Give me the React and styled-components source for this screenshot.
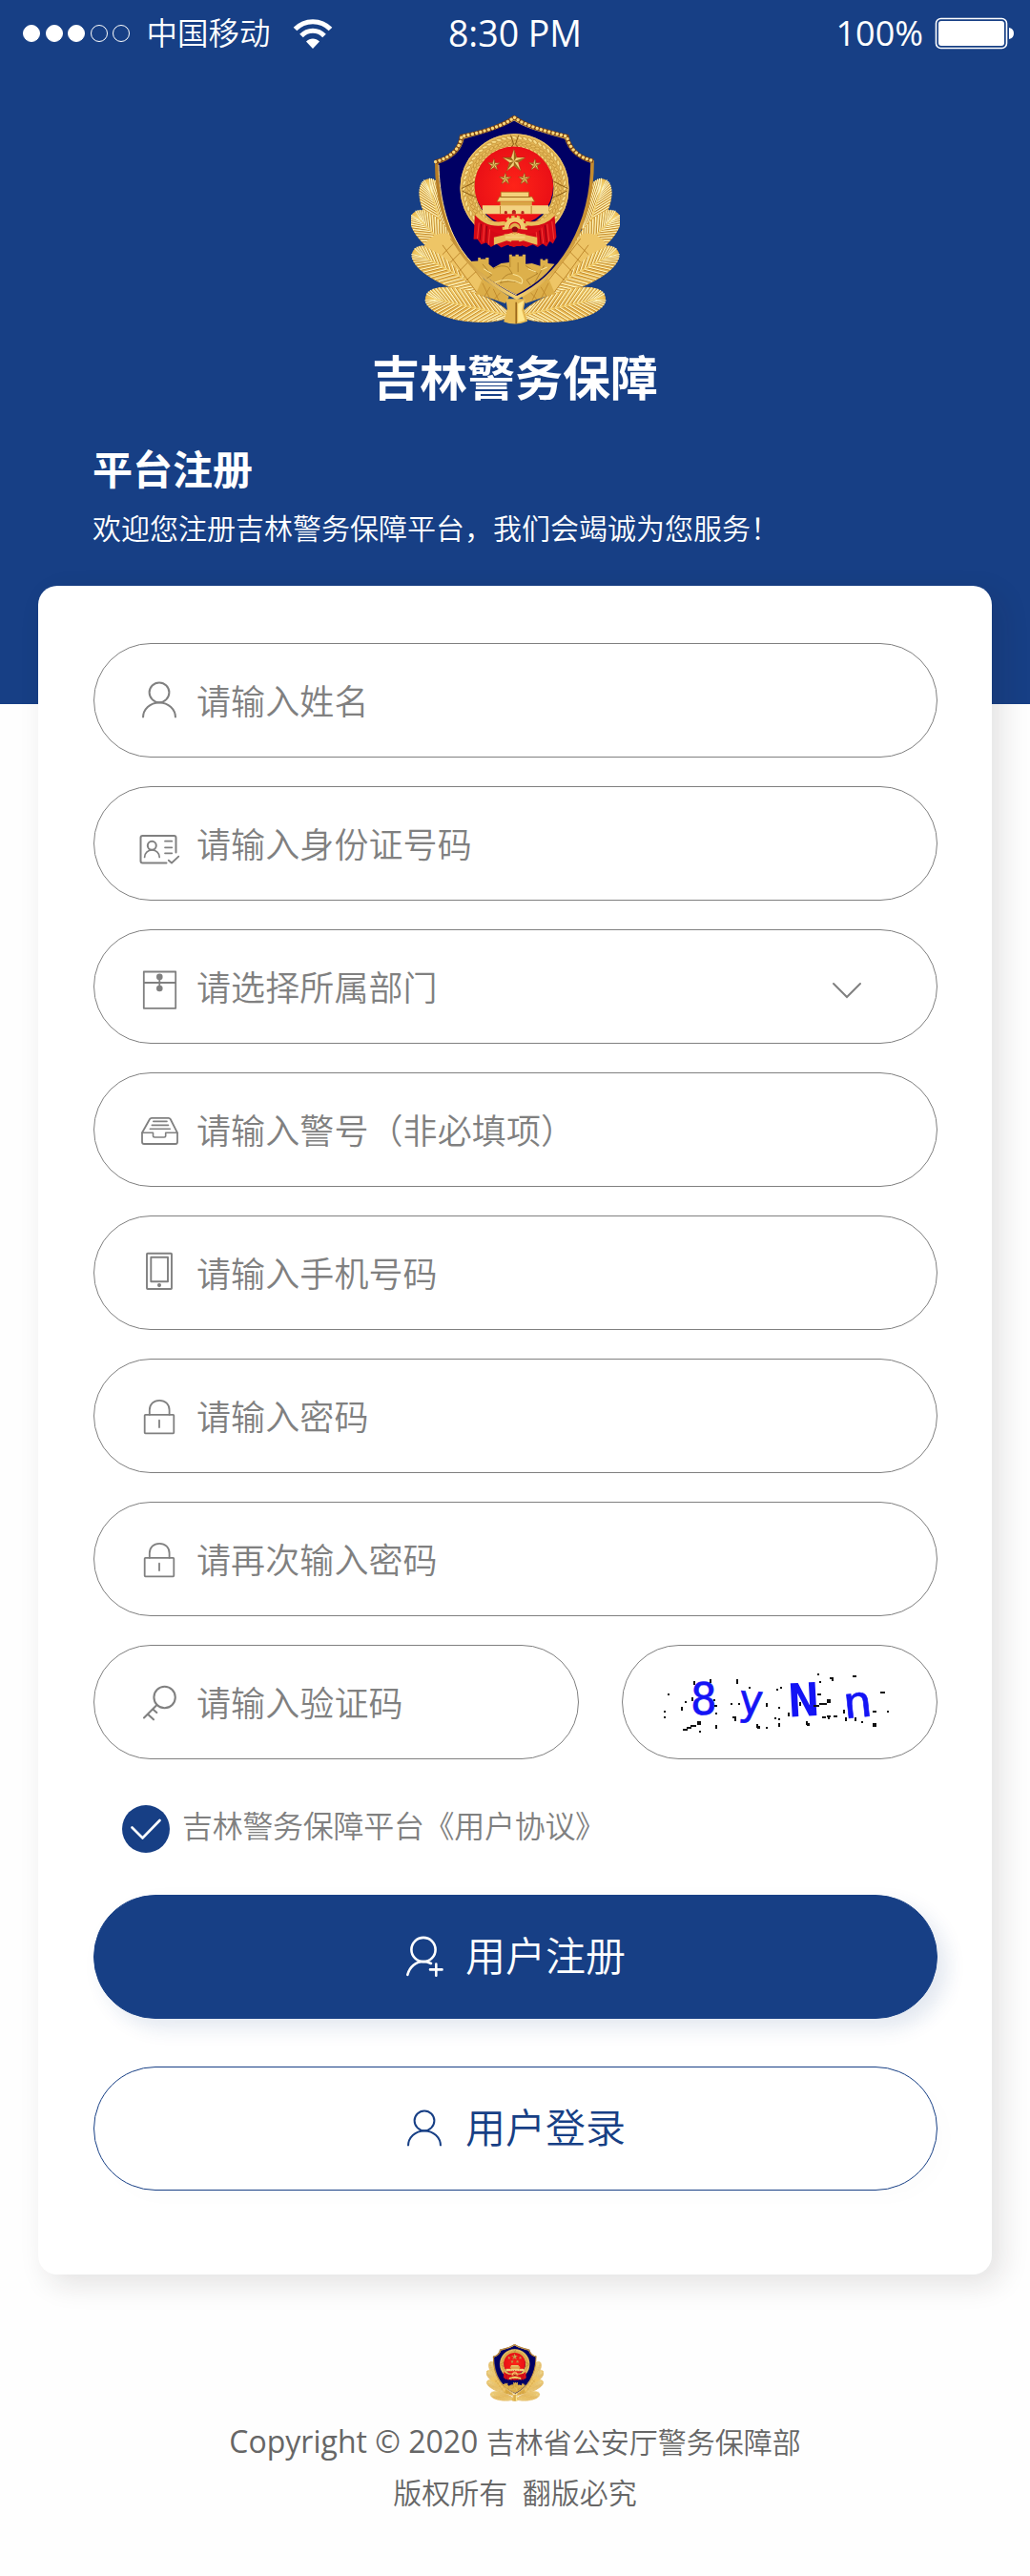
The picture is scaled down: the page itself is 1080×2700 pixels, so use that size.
import React, { useState } from 'react';
import styled, { createGlobalStyle } from 'styled-components';

const leaves = [
  { x: 200, y: 450, tx: 141, ty: 264, w: 54 },
  { x: 255, y: 530, tx: 99, ty: 370, w: 58 },
  { x: 350, y: 625, tx: 98, ty: 490, w: 62 },
  { x: 410, y: 694, tx: 138, ty: 634, w: 64 },
];

const Leaf = ({ x, y, tx, ty, w }) => {
  const len = Math.hypot(tx - x, ty - y);
  const angle = Math.atan2(ty - y, tx - x) * 180 / Math.PI;
  const barbs = [];
  for (let t = 0.14; t < 0.97; t += 0.042) {
    const ex = len * (0.9 * (1 - t) * (1 - t) * t + 3 * (1 - t) * t * t + t * t * t);
    const ey = 3 * t * (1 - t) * w;
    const sx = Math.max(0, ex - 34 - ey * 0.3);
    barbs.push(`M${sx} 0L${ex} ${ey}M${sx} 0L${ex} ${-ey}`);
  }
  return (
    <g transform={`translate(${x} ${y}) rotate(${angle})`}>
      <path
        d={`M0 0C${len * 0.3} ${-w} ${len} ${-w} ${len} 0C${len} ${w} ${len * 0.3} ${w} 0 0Z`}
        fill="url(#gold)" stroke="#e6b149" strokeWidth="3"
      />
      <path d={barbs.join('')} stroke="#9a5c0c" strokeWidth="2.4" opacity="0.7" />
      <path d={barbs.join('')} stroke="#fff6c0" strokeWidth="3.2" transform="translate(3.4 0)" />
      <path d={`M0 0H${len - 8}`} stroke="#f3cf6c" strokeWidth="4" />
    </g>
  );
};

const Star = ({ cx, cy, r }) => {
  const points = [];
  for (let i = 0; i < 10; i++) {
    const rad = i % 2 ? r * 0.39 : r;
    const a = -Math.PI / 2 + i * Math.PI / 5;
    points.push([cx + rad * Math.cos(a), cy + rad * Math.sin(a)]);
  }
  return (
    <g>
      <polygon points={points.map((p) => p.join(',')).join(' ')} fill="#f3d27a" stroke="#9d2a0c" strokeWidth="1.5" />
      {[0, 2, 4, 6, 8].map((i) => (
        <polygon key={i} points={`${cx},${cy} ${points[i].join(',')} ${points[i + 1].join(',')}`} fill="#9c6518" />
      ))}
    </g>
  );
};

// ears of grain laid along the ring around the red disc
const grains = [];
for (let a = 0; a < 360; a += 6) {
  grains.push(a);
}

const shieldTop = 'M168 208C215 195 245 168 250 128C300 118 375 100 416 68C455 98 520 112 582 128C590 168 620 195 665 205';

const Emblem = ({ size }) => (
  <svg width={size} height={size} viewBox="92 62 656 658">
    <defs>
      <linearGradient id="gold" x1="0" y1="0" x2="1" y2="1">
        <stop offset="0" stopColor="#fadb82" />
        <stop offset="0.5" stopColor="#e4b049" />
        <stop offset="1" stopColor="#f5d473" />
      </linearGradient>
      <linearGradient id="rim" x1="0" y1="0" x2="1" y2="0">
        <stop offset="0" stopColor="#b67d25" />
        <stop offset="0.5" stopColor="#f3cf70" />
        <stop offset="1" stopColor="#c48b2e" />
      </linearGradient>
      <radialGradient id="red">
        <stop offset="0" stopColor="#ff2318" />
        <stop offset="1" stopColor="#ea1016" />
      </radialGradient>
    </defs>
    {[undefined, 'matrix(-1 0 0 1 840 0)'].map((transform, side) => (
      <g key={side} transform={transform}>
        {leaves.map((leaf) => <Leaf key={leaf.ty} {...leaf} />)}
        <path d="M132 475C150 438 180 428 212 436L330 590L300 622C260 570 205 500 132 475Z" fill="#eec566" />
        <path d="M190 470L300 622M215 450L330 600M190 500L225 465M215 525L250 490M240 555L275 520M262 585L305 545" fill="none" stroke="#b57c22" strokeWidth="2.5" />
        <path d="M296 622L316 575L400 632L388 654Z" fill="#dcae49" />
        <path d="M316 590L340 640M340 602L322 632M350 608L368 646M372 620L352 642" stroke="#b57c22" strokeWidth="2" />
      </g>
    ))}
    <path d="M390 640H452L446 670L458 710Q420 726 383 712L394 672Z" fill="#e5b954" />
    <path d="M422 650V718" stroke="#8b5710" strokeWidth="4" />
    <path d="M428 655L446 645L440 675L450 708L428 714Z" fill="#ffe88f" />
    <path
      d="M416 72C375 100 300 118 253 132C247 170 215 198 172 210C170 300 195 410 244 485C290 555 350 600 424 636C500 600 550 550 592 480C642 395 662 300 662 208C620 195 590 168 580 132C520 114 455 100 416 72Z"
      fill="#000064" stroke="url(#rim)" strokeWidth="11"
    />
    <path d="M178 218C180 310 200 410 250 485C295 550 355 592 424 627" fill="none" stroke="#ffe291" strokeWidth="3" />
    <path d={shieldTop} fill="none" stroke="#794113" strokeWidth="13" />
    <path d={shieldTop} fill="none" stroke="#f8d77c" strokeWidth="10" strokeLinecap="round" strokeDasharray="0.1 13" />

    <circle cx="417" cy="291" r="147" fill="none" stroke="#e2b354" strokeWidth="48" />
    {grains.map((a) => (
      <g key={a} transform={`rotate(${a} 417 291)`} stroke="#b07d25" strokeWidth="1.4">
        <ellipse cx="417" cy="132" rx="9" ry="4.5" fill="#f8dc88" transform="rotate(24 417 132)" />
        <ellipse cx="417" cy="147" rx="8" ry="4.5" fill="#e9bd5e" transform="rotate(-20 417 147)" />
        <ellipse cx="417" cy="160" rx="7" ry="4" fill="#f3d075" transform="rotate(18 417 160)" />
      </g>
    ))}
    <circle cx="417" cy="291" r="170" fill="none" stroke="#efca6d" strokeWidth="3" />
    <path d="M405 124L414 152L404 166M430 124L420 152L432 166M250 292L295 270M585 292L540 270M252 300L300 322M582 300L536 322" fill="none" stroke="#8d5c13" strokeWidth="3" />
    <circle cx="415" cy="284" r="124" fill="url(#red)" />
    <Star cx={415} cy={206} r={38} />
    <Star cx={352} cy={218} r={20} />
    <Star cx={481} cy={218} r={20} />
    <Star cx={388} cy={262} r={20} />
    <Star cx={448} cy={262} r={20} />

    <path d="M292 375L325 392L380 398H455L510 392L543 375L549 445L538 466L528 458L518 475L505 466L490 477L475 468L455 477L435 470L415 477L395 470L375 478L360 466L343 477L328 462L312 468L300 452L288 452Z" fill="#d50a16" />
    <path d="M305 400L300 450M322 405L318 460M340 412L335 470M484 420L490 470M502 412L508 465M520 404L526 460M535 396L541 452" stroke="#f83a34" strokeWidth="3" />
    <path d="M312 404L308 455M330 410L327 462M495 415L500 468M513 408L518 462" stroke="#8d0010" strokeWidth="3" />
    <path d="M298 372Q330 410 385 402M540 372Q505 410 452 402" fill="none" stroke="#e8bd5b" strokeWidth="13" />
    <path d="M374 303H462V318H472L480 333H362L370 318H374Z" fill="#f4d27a" stroke="#a66b15" strokeWidth="2" />
    <path d="M372 319H466" stroke="#9c6418" strokeWidth="3" />
    <path d="M372 333H472V347H372Z" fill="#d9a645" />
    <path d="M316 345H524V372H316Z" fill="#f3d281" />
    <path d="M372 347V372M470 347V372" stroke="#bd8429" strokeWidth="3" />
    <path d="M385 372V365Q389 360 394 365V372ZM409 372V363Q415 356 421 363V372ZM438 372V365Q442 360 447 365V372Z" fill="#b8231b" />
    <circle cx="418" cy="416" r="35" fill="none" stroke="#e5b855" strokeWidth="9" strokeDasharray="10 7" />
    <circle cx="418" cy="416" r="26" fill="none" stroke="#f1cc6e" strokeWidth="14" />
    <circle cx="418" cy="418" r="17" fill="#e2b14c" />
    <path d="M352 446L395 436L418 446L442 436L488 446V470L445 456L418 464L392 456L352 470Z" fill="#e8bd5b" />
    <path d="M400 474L408 456H430L440 474Z" fill="#d50a16" />
    <path d="M388 446H450" stroke="#f3cf77" strokeWidth="8" />
    <path d="M330 408Q375 434 418 414Q460 434 508 408L496 424Q455 446 418 428Q380 446 342 424Z" fill="#dc0c17" />
    <circle cx="418" cy="421" r="9" fill="#8f0b12" />

    <path d="M276 522L302 520V510H310V514H326V510H336V530L350 542L375 528L400 525V500H409V505H420V500H430V505H442V500H452V530L472 528L498 536V514H506V518H514V514H522V528L543 530C512 570 472 600 424 625C365 598 315 568 276 522Z" fill="#ddb04b" />
    <path d="M350 545Q375 530 397 540L410 560Q385 560 372 590Q395 580 430 588M452 535L490 560L455 580L470 600M403 508V540M428 525V555M316 530L345 565L330 575M510 535L480 590" fill="none" stroke="#a87a26" strokeWidth="2.4" />
    <path d="M355 588Q395 570 440 592Q450 570 412 562M460 545L485 555M320 545L345 560M500 548L520 540" fill="none" stroke="#fbe79d" strokeWidth="3" />
  </svg>
);

const IconSvg = styled.svg`
  width: 40px;
  height: 48px;
  flex: none;
  overflow: visible;
  fill: none;
  stroke: currentColor;
  stroke-width: ${(props) => props.$weight || 2};
  stroke-linecap: round;
  stroke-linejoin: round;
`;

const UserIcon = () => (
  <IconSvg viewBox="0 0 40 48">
    <circle cx="20" cy="15.8" r="10.4" />
    <path d="M3 42.3C3 33.5 10.3 26.5 20 26.5S37 33.5 37 42.3" strokeLinecap="butt" />
  </IconSvg>
);

const AddUserIcon = () => (
  <IconSvg viewBox="0 0 40 48" $weight={2.6}>
    <circle cx="19" cy="16.5" r="12.6" />
    <path d="M2.3 42.8C4.6 34.5 11 29 19 29C22 29 24.5 29.7 27 31M32.3 31.5V43.7M26 37.4H38.5" />
  </IconSvg>
);

const CardIcon = () => (
  <IconSvg viewBox="0 0 40 48">
    <path d="M37.5 33.5V18Q37.5 16 35.5 16H2.5Q.5 16 .5 18V42.4Q.5 44.4 2.5 44.4H27.5" />
    <circle cx="12.3" cy="26.3" r="4.5" />
    <path d="M4.6 38.5C4.6 34 8 31 12.4 31S20.2 34 20.2 38.5M26 21.7H33.3M26 28.3H33.3M26 34.3H33.3" strokeWidth="1.7" />
    <path d="M29.8 41.7L33 44.5L40.3 37.6" strokeWidth="1.8" />
  </IconSvg>
);

const FileIcon = () => (
  <IconSvg viewBox="0 0 40 48" $weight={1.8}>
    <path d="M3.8 8.5H37.2V46.8H3.8ZM3.8 20H37.2M20.3 13.7V26" />
    <circle cx="20.3" cy="13.9" r="2.4" fill="currentColor" />
    <circle cx="20.3" cy="26" r="2.4" fill="currentColor" />
  </IconSvg>
);

const TrayIcon = () => (
  <IconSvg viewBox="0 0 40 48" $weight={1.8}>
    <path d="M2 27.3L10 13Q10.7 11.8 12 11.8H29.7Q31 11.8 31.7 13L39 27.3V37Q39 39 37 39H4Q2 39 2 37Z" />
    <path d="M2 27.3H13.5V30.3Q13.5 32 15.2 32H25Q26.7 32 26.7 30.3V27.3H39M13.8 15.4H28M12.3 19.4H29.5M10.3 23.3H31.3" strokeWidth="1.6" />
  </IconSvg>
);

const PhoneIcon = () => (
  <IconSvg viewBox="0 0 40 48" $weight={1.9}>
    <rect x="7" y="3.8" width="26" height="37.2" rx="0.8" />
    <rect x="11.3" y="7.7" width="17.7" height="25.6" />
    <circle cx="20" cy="37.1" r="1.1" fill="currentColor" />
  </IconSvg>
);

const LockIcon = () => (
  <IconSvg viewBox="0 0 40 48" $weight={1.8}>
    <rect x="4.7" y="22.8" width="30.6" height="19.5" rx="0.8" />
    <path d="M9.8 22.8V18C9.8 11.8 14 7.8 20.2 7.8S30.6 11.8 30.6 18V22.8M20 28.7V36" />
  </IconSvg>
);

const KeyIcon = () => (
  <IconSvg viewBox="0 0 40 48" $weight={2.1}>
    <circle cx="25.6" cy="19" r="11.2" />
    <path d="M17.5 27L4 40.5M8 36.8L14 42.3M13.3 31.5L17.3 35" />
  </IconSvg>
);

const fields = [
  { label: '请输入姓名', icon: <UserIcon /> },
  { label: '请输入身份证号码', icon: <CardIcon /> },
  { label: '请选择所属部门', icon: <FileIcon />, select: true },
  { label: '请输入警号（非必填项）', icon: <TrayIcon /> },
  { label: '请输入手机号码', icon: <PhoneIcon /> },
  { label: '请输入密码', icon: <LockIcon /> },
  { label: '请再次输入密码', icon: <LockIcon /> },
];

// noise of the verification picture: x, y, width, height
const noise = [
  [226, 186, 2, 4], [243, 184, 2, 4], [199, 199, 2, 2], [217, 207, 2, 2], [224, 203, 2, 4],
  [213, 213, 2, 4], [195, 217, 2, 2], [195, 223, 2, 2], [247, 205, 2, 2], [248, 211, 3, 2],
  [249, 219, 2, 2], [249, 232, 2, 4], [232, 238, 2, 2], [230, 228, 4, 4], [223, 232, 6, 2],
  [219, 234, 5, 2], [215, 236, 5, 2], [265, 209, 2, 2], [273, 209, 2, 2], [271, 184, 2, 5],
  [284, 192, 2, 2], [302, 209, 2, 4], [267, 223, 4, 2], [269, 225, 2, 3], [292, 231, 2, 4],
  [293, 233, 3, 3], [302, 234, 2, 2], [313, 194, 2, 2], [317, 192, 2, 2], [315, 213, 2, 2],
  [311, 224, 2, 2], [315, 225, 2, 2], [315, 230, 2, 4], [325, 219, 2, 4], [337, 208, 2, 4],
  [344, 228, 2, 4], [345, 230, 3, 3], [356, 178, 2, 2], [358, 186, 2, 2], [369, 182, 4, 2],
  [371, 183, 2, 3], [356, 199, 4, 2], [352, 211, 6, 2], [358, 209, 8, 2], [366, 205, 4, 4],
  [361, 223, 4, 2], [366, 222, 4, 2], [367, 223, 2, 3], [373, 222, 4, 2], [393, 180, 4, 2],
  [383, 216, 2, 4], [385, 224, 2, 4], [395, 224, 2, 4], [402, 228, 2, 2], [414, 217, 4, 2],
  [414, 230, 4, 4], [422, 197, 5, 2], [429, 217, 2, 2],
];

const Captcha = () => (
  <CaptchaBox>
    <svg width="250" height="76" viewBox="192 170 250 76">
      <g fill="#1414f5" stroke="#1414f5" strokeWidth="0.6" fontFamily="'DejaVu Sans Mono', monospace" fontSize="46">
        <text x="223" y="221">8</text>
        <text x="273" y="221" fontSize="44" transform="rotate(4 287 210)">y</text>
        <text x="326" y="222" strokeWidth="1.6" textLength="31" lengthAdjust="spacingAndGlyphs" transform="rotate(-3 341 205)">N</text>
        <text x="383" y="224" textLength="31" lengthAdjust="spacingAndGlyphs" transform="rotate(-6 399 212)">n</text>
      </g>
      {noise.map(([x, y, w, h], i) => <rect key={i} x={x} y={y} width={w} height={h} fill="#111" />)}
    </svg>
  </CaptchaBox>
);

function App() {
  const [agreed, setAgreed] = useState(true);

  return (
    <Page>
      <GlobalStyle />
      <Header>
        <StatusBar>
          <Carrier>
            <Signal>
              <Dot $on /><Dot $on /><Dot $on /><Dot /><Dot />
            </Signal>
            <CarrierName>中国移动</CarrierName>
            <svg width="42" height="33" viewBox="0 0 42 33" fill="none" stroke="#fff">
              <path d="M2.5 11.5C12.5 1 29.5 1 39.5 11.5" strokeWidth="5" />
              <path d="M9 18.5C15.5 11.5 26.5 11.5 33 18.5" strokeWidth="5" />
              <path d="M14 24.5C18 20.5 24 20.5 28 24.5L21 32Z" fill="#fff" stroke="none" />
            </svg>
          </Carrier>
          <Clock>8:30 PM</Clock>
          <Power>
            100%
            <svg width="84" height="34" viewBox="0 0 84 34">
              <rect x="1.5" y="1.5" width="74" height="31" rx="5" fill="none" stroke="#fff" strokeWidth="1.6" />
              <rect x="4" y="4" width="69" height="26" rx="3" fill="#fff" />
              <path d="M78 11Q83 12 83 17T78 23Z" fill="#fff" />
            </svg>
          </Power>
        </StatusBar>
        <Brand>
          <Emblem size={219} />
          <BrandName>吉林警务保障</BrandName>
        </Brand>
        <Title>平台注册</Title>
        <Welcome>欢迎您注册吉林警务保障平台，我们会竭诚为您服务！</Welcome>
      </Header>

      <Card>
        {fields.map((field) => (
          <Field key={field.label}>
            {field.icon}
            <Placeholder>{field.label}</Placeholder>
            {field.select && (
              <Chevron viewBox="0 0 32 18">
                <path d="M2 2L16 16L30 2" />
              </Chevron>
            )}
          </Field>
        ))}
        <CodeRow>
          <Field>
            <KeyIcon />
            <Placeholder>请输入验证码</Placeholder>
          </Field>
          <Captcha />
        </CodeRow>
        <Agreement onClick={() => setAgreed(!agreed)}>
          <Check $on={agreed}>
            <svg width="32" height="22" viewBox="0 0 32 22" fill="none" stroke="#fff" strokeWidth="2.6" strokeLinecap="round">
              <path d="M1.5 9.5L12.5 20.5L30.5 2" />
            </svg>
          </Check>
          <AgreementText>吉林警务保障平台《用户协议》</AgreementText>
        </Agreement>
        <RegisterButton><AddUserIcon /><ButtonText>用户注册</ButtonText></RegisterButton>
        <LoginButton><UserIcon /><ButtonText>用户登录</ButtonText></LoginButton>
      </Card>

      <Footer>
        <Emblem size={60} />
        <Copyright><Latin>Copyright © 2020 </Latin>吉林省公安厅警务保障部</Copyright>
        <Rights>版权所有&nbsp; 翻版必究</Rights>
      </Footer>
    </Page>
  );
}

const GlobalStyle = createGlobalStyle`
  * {
    box-sizing: border-box;
  }
  body {
    margin: 0;
    background: #fff;
  }
  svg {
    display: block;
  }
`;

const Page = styled.div`
  width: 1080px;
  height: 2700px;
  background: #fefefe;
  font-family: "Noto Sans", "Noto Sans CJK SC", sans-serif;
  font-weight: 350;
`;

const Header = styled.header`
  height: 738px;
  background: #173f85;
  color: #fff;
`;

const StatusBar = styled.div`
  display: grid;
  grid-template-columns: 1fr auto 1fr;
  align-items: center;
  height: 70px;
  padding: 0 16px;
`;

const Carrier = styled.div`
  display: flex;
  align-items: center;
  padding-left: 8px;
`;

const Signal = styled.div`
  display: flex;
  gap: 5.6px;
  margin-right: 17px;
`;

const Dot = styled.span`
  width: 18px;
  height: 18px;
  border: 1.5px solid #fff;
  border-radius: 50%;
  background: ${(props) => (props.$on ? '#fff' : 'transparent')};
`;

const CarrierName = styled.span`
  margin-right: 24px;
  font-size: 32.5px;
  line-height: 40px;
`;

const Clock = styled.span`
  font-family: "Open Sans", "Noto Sans", sans-serif;
  font-size: 37.5px;
  font-weight: 400;
  line-height: 40px;
`;

const Power = styled.div`
  display: flex;
  align-items: center;
  justify-content: flex-end;
  gap: 12px;
  font-family: "Open Sans", "Noto Sans", sans-serif;
  font-size: 36px;
  font-weight: 400;
  line-height: 40px;
`;

const Brand = styled.div`
  display: flex;
  flex-direction: column;
  align-items: center;
  padding-top: 51px;
`;

const BrandName = styled.h1`
  margin: 20px 0 0;
  font-size: 50px;
  font-weight: 700;
  line-height: 72px;
`;

const Title = styled.h2`
  margin: 30px 0 0 97px;
  font-size: 42px;
  font-weight: 700;
  line-height: 60px;
`;

const Welcome = styled.p`
  margin: 12px 0 0 97px;
  font-size: 30px;
  line-height: 40px;
`;

const Card = styled.main`
  position: relative;
  display: flex;
  flex-direction: column;
  width: 1000px;
  height: 1770px;
  margin: -124px auto 0;
  padding: 60px 57px 0 58px;
  border-radius: 20px;
  background: #fff;
  box-shadow: 10px 10px 30px rgba(35, 24, 24, 0.12);
`;

const Field = styled.div`
  display: flex;
  align-items: center;
  height: 120px;
  margin-bottom: 30px;
  padding: 0 78px 0 48px;
  border: 1px solid #808080;
  border-radius: 60px;
  color: #808080;
`;

const Placeholder = styled.span`
  flex: 1;
  margin-left: 19px;
  padding-top: 4px;
  font-size: 36px;
  line-height: 52px;
  letter-spacing: 0.1px;
  white-space: nowrap;
`;

const Chevron = styled.svg`
  width: 32px;
  height: 18px;
  margin-top: 8px;
  fill: none;
  stroke: currentColor;
  stroke-width: 2;
  stroke-linecap: round;
`;

const CodeRow = styled.div`
  display: grid;
  grid-template-columns: 509px 331px;
  justify-content: space-between;
`;

const CaptchaBox = styled.div`
  display: flex;
  align-items: center;
  justify-content: center;
  height: 120px;
  border: 1px solid #808080;
  border-radius: 60px;
`;

const Agreement = styled.div`
  display: flex;
  align-items: center;
  gap: 13px;
  height: 50px;
  margin: 18px 0 44px 30px;
  color: #808080;
`;

const AgreementText = styled.span`
  padding-bottom: 6px;
  font-size: 32px;
  line-height: 44px;
  letter-spacing: -0.3px;
`;

const Check = styled.span`
  display: flex;
  align-items: center;
  justify-content: center;
  width: 50px;
  height: 50px;
  border-radius: 50%;
  background: ${(props) => (props.$on ? '#173f85' : '#c4c4c4')};
`;

const RegisterButton = styled.button`
  display: flex;
  align-items: center;
  justify-content: center;
  gap: 23px;
  height: 130px;
  border: 1px solid #173f85;
  border-radius: 65px;
  background: #173f85;
  color: #fff;
  font-family: inherit;
  font-size: 42px;
  font-weight: 350;
  line-height: 60px;
  box-shadow: 10px 10px 20px rgba(23, 63, 133, 0.12);
`;

const LoginButton = styled(RegisterButton)`
  margin-top: 50px;
  background: #fff;
  color: #173f85;
  box-shadow: 10px 10px 20px rgba(0, 0, 0, 0.01);
`;

const ButtonText = styled.span`
  padding-bottom: 3px;
`;

const Footer = styled.footer`
  display: flex;
  flex-direction: column;
  align-items: center;
  padding-top: 73px;
  color: #666;
  font-size: 30px;
`;

const Copyright = styled.p`
  margin: 19px 0 0;
  line-height: 46px;
  white-space: pre;
`;

const Latin = styled.span`
  font-family: "Open Sans", "Noto Sans", sans-serif;
  font-size: 32px;
  font-weight: 400;
`;

const Rights = styled.p`
  margin: 7px 0 0;
  line-height: 46px;
`;

export default App;
